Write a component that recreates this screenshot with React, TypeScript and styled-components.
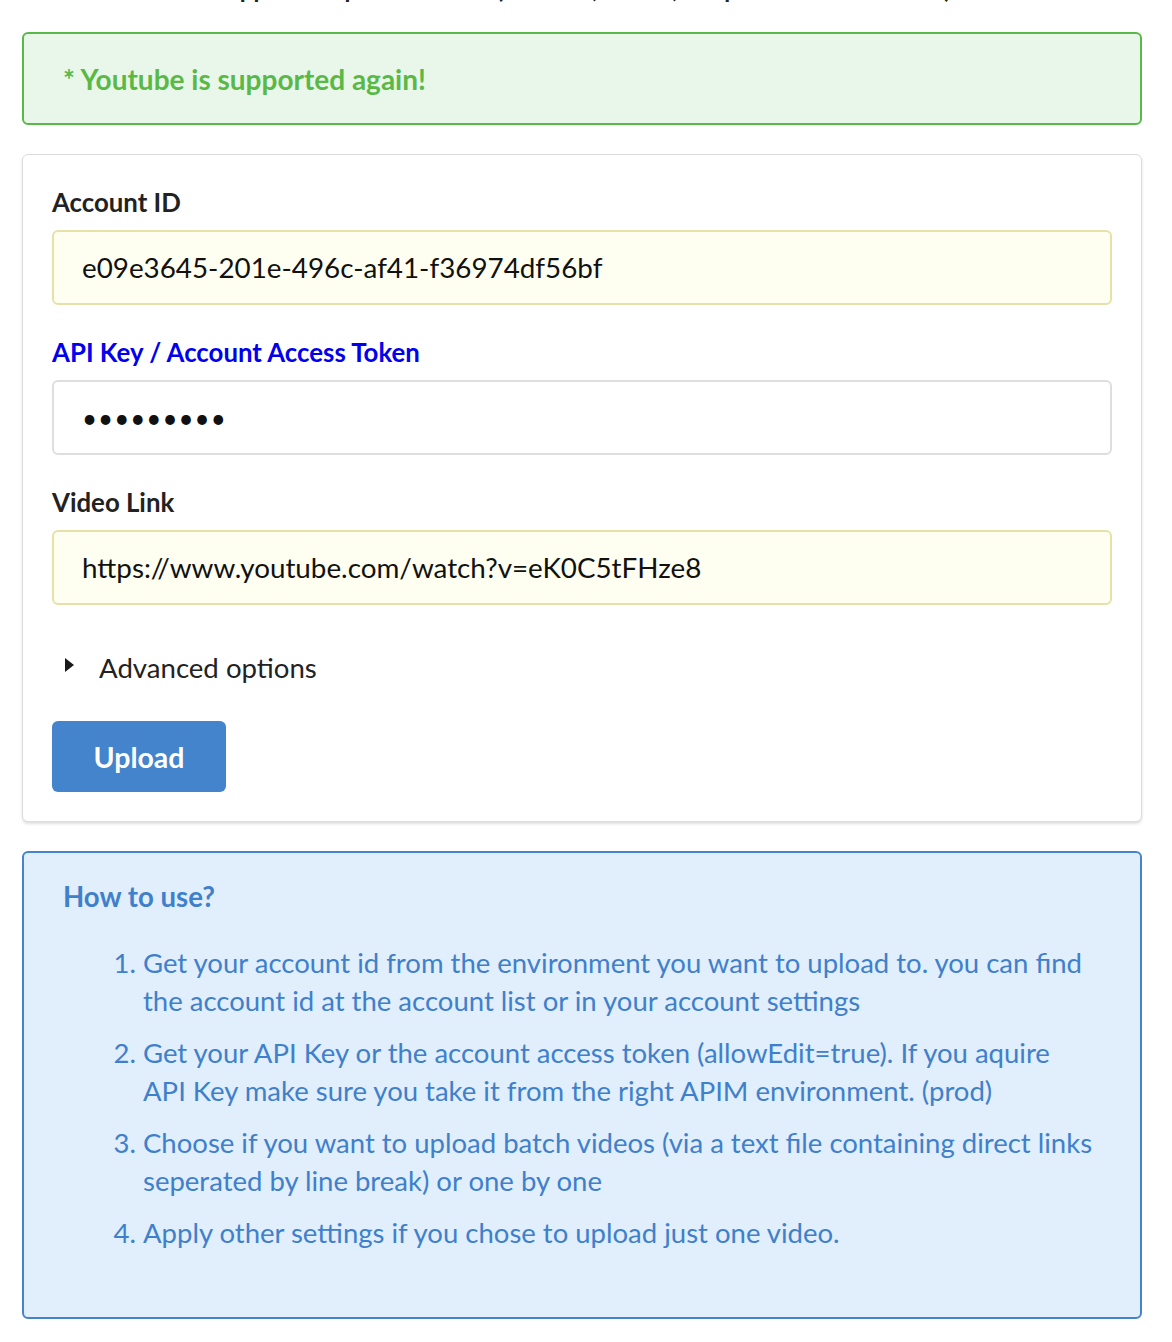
import React from "react";
import styled, { createGlobalStyle } from "styled-components";

const GlobalStyle = createGlobalStyle`
  html, body { margin: 0; padding: 0; background: #ffffff; }
  body { font-family: Lato, "Noto Sans", "Liberation Sans", sans-serif; color: #222; }
  * { box-sizing: border-box; }
`;

const Page = styled.div`
  width: 1172px;
  padding: 0 30px 40px 22px;
  overflow: hidden;
`;

const Heading = styled.h2`
  margin: -26px 0 28px;
  font-size: 24px;
  line-height: 30px;
  font-weight: 700;
  text-align: center;
  color: #222;
`;

const Alert = styled.div`
  border: 2px solid #58b948;
  background: #e9f7ea;
  border-radius: 6px;
  padding: 29px 39px 27px;
  font-size: 28px;
  line-height: 33px;
  font-weight: 700;
  color: #5ab946;
`;

const Card = styled.form`
  margin-top: 29px;
  border: 1px solid #dcdcdc;
  border-radius: 6px;
  box-shadow: 0 2px 3px rgba(0, 0, 0, 0.13);
  background: #fff;
  padding: 32px 29px 29px;
  display: flex;
  flex-direction: column;
`;

const Label = styled.label<{ $link?: boolean }>`
  display: block;
  font-size: 25.8px;
  line-height: 30px;
  font-weight: 700;
  color: ${(p) => (p.$link ? "#0000ee" : "#222")};
  margin-bottom: 13px;
`;

const Input = styled.input<{ $filled?: boolean }>`
  display: block;
  width: 100%;
  height: 75px;
  border-radius: 6px;
  border: 2px solid ${(p) => (p.$filled ? "#e6e1a9" : "#dedede")};
  background: ${(p) => (p.$filled ? "#fefff0" : "#ffffff")};
  padding: 0 28px;
  font-family: Lato, "Noto Sans", sans-serif;
  font-size: 27.8px;
  color: #111;
  outline: none;
  margin-bottom: 32px;
  &[type="password"] {
    font-size: 26px;
    letter-spacing: 1px;
  }
`;

const Advanced = styled.div`
  display: flex;
  align-items: center;
  height: 30px;
  margin-top: 15px;
  padding-left: 13px;
  font-size: 27.6px;
  color: #222;
`;

const Caret = styled.span`
  width: 0;
  height: 0;
  border-left: 9px solid #1a1a1a;
  border-top: 7px solid transparent;
  border-bottom: 7px solid transparent;
  margin-right: 25px;
  margin-top: -5px;
`;

const Button = styled.button`
  align-self: flex-start;
  margin-top: 39px;
  width: 174px;
  height: 71px;
  border: none;
  border-radius: 6px;
  background: #4384cc;
  color: #fff;
  font-family: Lato, "Noto Sans", sans-serif;
  font-size: 28.5px;
  font-weight: 700;
  cursor: pointer;
`;

const Info = styled.div`
  margin-top: 29px;
  border: 2px solid #4584cb;
  border-radius: 6px;
  background: #e1eefb;
  padding: 28px 45px 28px 39px;
  color: #3f80cc;
`;

const InfoTitle = styled.h3`
  margin: 0;
  font-size: 27.6px;
  line-height: 31px;
  font-weight: 700;
`;

const Steps = styled.ol`
  margin: 32px 0 37px;
  padding-left: 80px;
  font-size: 27.5px;
  line-height: 38px;
`;

const Step = styled.li`
  margin-bottom: 14px;
  &:last-child { margin-bottom: 0; }
`;

export default function App() {
  return (
    <>
      <GlobalStyle />
      <Page>
        <Heading>Supported upload sources (Youtube, Vimeo, Dropbox and direct links)</Heading>
        <Alert>* Youtube is supported again!</Alert>
        <Card onSubmit={(e) => e.preventDefault()}>
          <Label htmlFor="acc">Account ID</Label>
          <Input id="acc" $filled defaultValue="e09e3645-201e-496c-af41-f36974df56bf" />
          <Label htmlFor="key" $link>API Key / Account Access Token</Label>
          <Input id="key" type="password" defaultValue="123456789" />
          <Label htmlFor="link">Video Link</Label>
          <Input id="link" $filled defaultValue="https://www.youtube.com/watch?v=eK0C5tFHze8" />
          <Advanced>
            <Caret />
            Advanced options
          </Advanced>
          <Button type="submit">Upload</Button>
        </Card>
        <Info>
          <InfoTitle>How to use?</InfoTitle>
          <Steps>
            <Step>Get your account id from the environment you want to upload to. you can find the account id at the account list or in your account settings</Step>
            <Step>Get your API Key or the account access token (allowEdit=true). If you aquire API Key make sure you take it from the right APIM environment. (prod)</Step>
            <Step>Choose if you want to upload batch videos (via a text file containing direct links seperated by line break) or one by one</Step>
            <Step>Apply other settings if you chose to upload just one video.</Step>
          </Steps>
        </Info>
      </Page>
    </>
  );
}
